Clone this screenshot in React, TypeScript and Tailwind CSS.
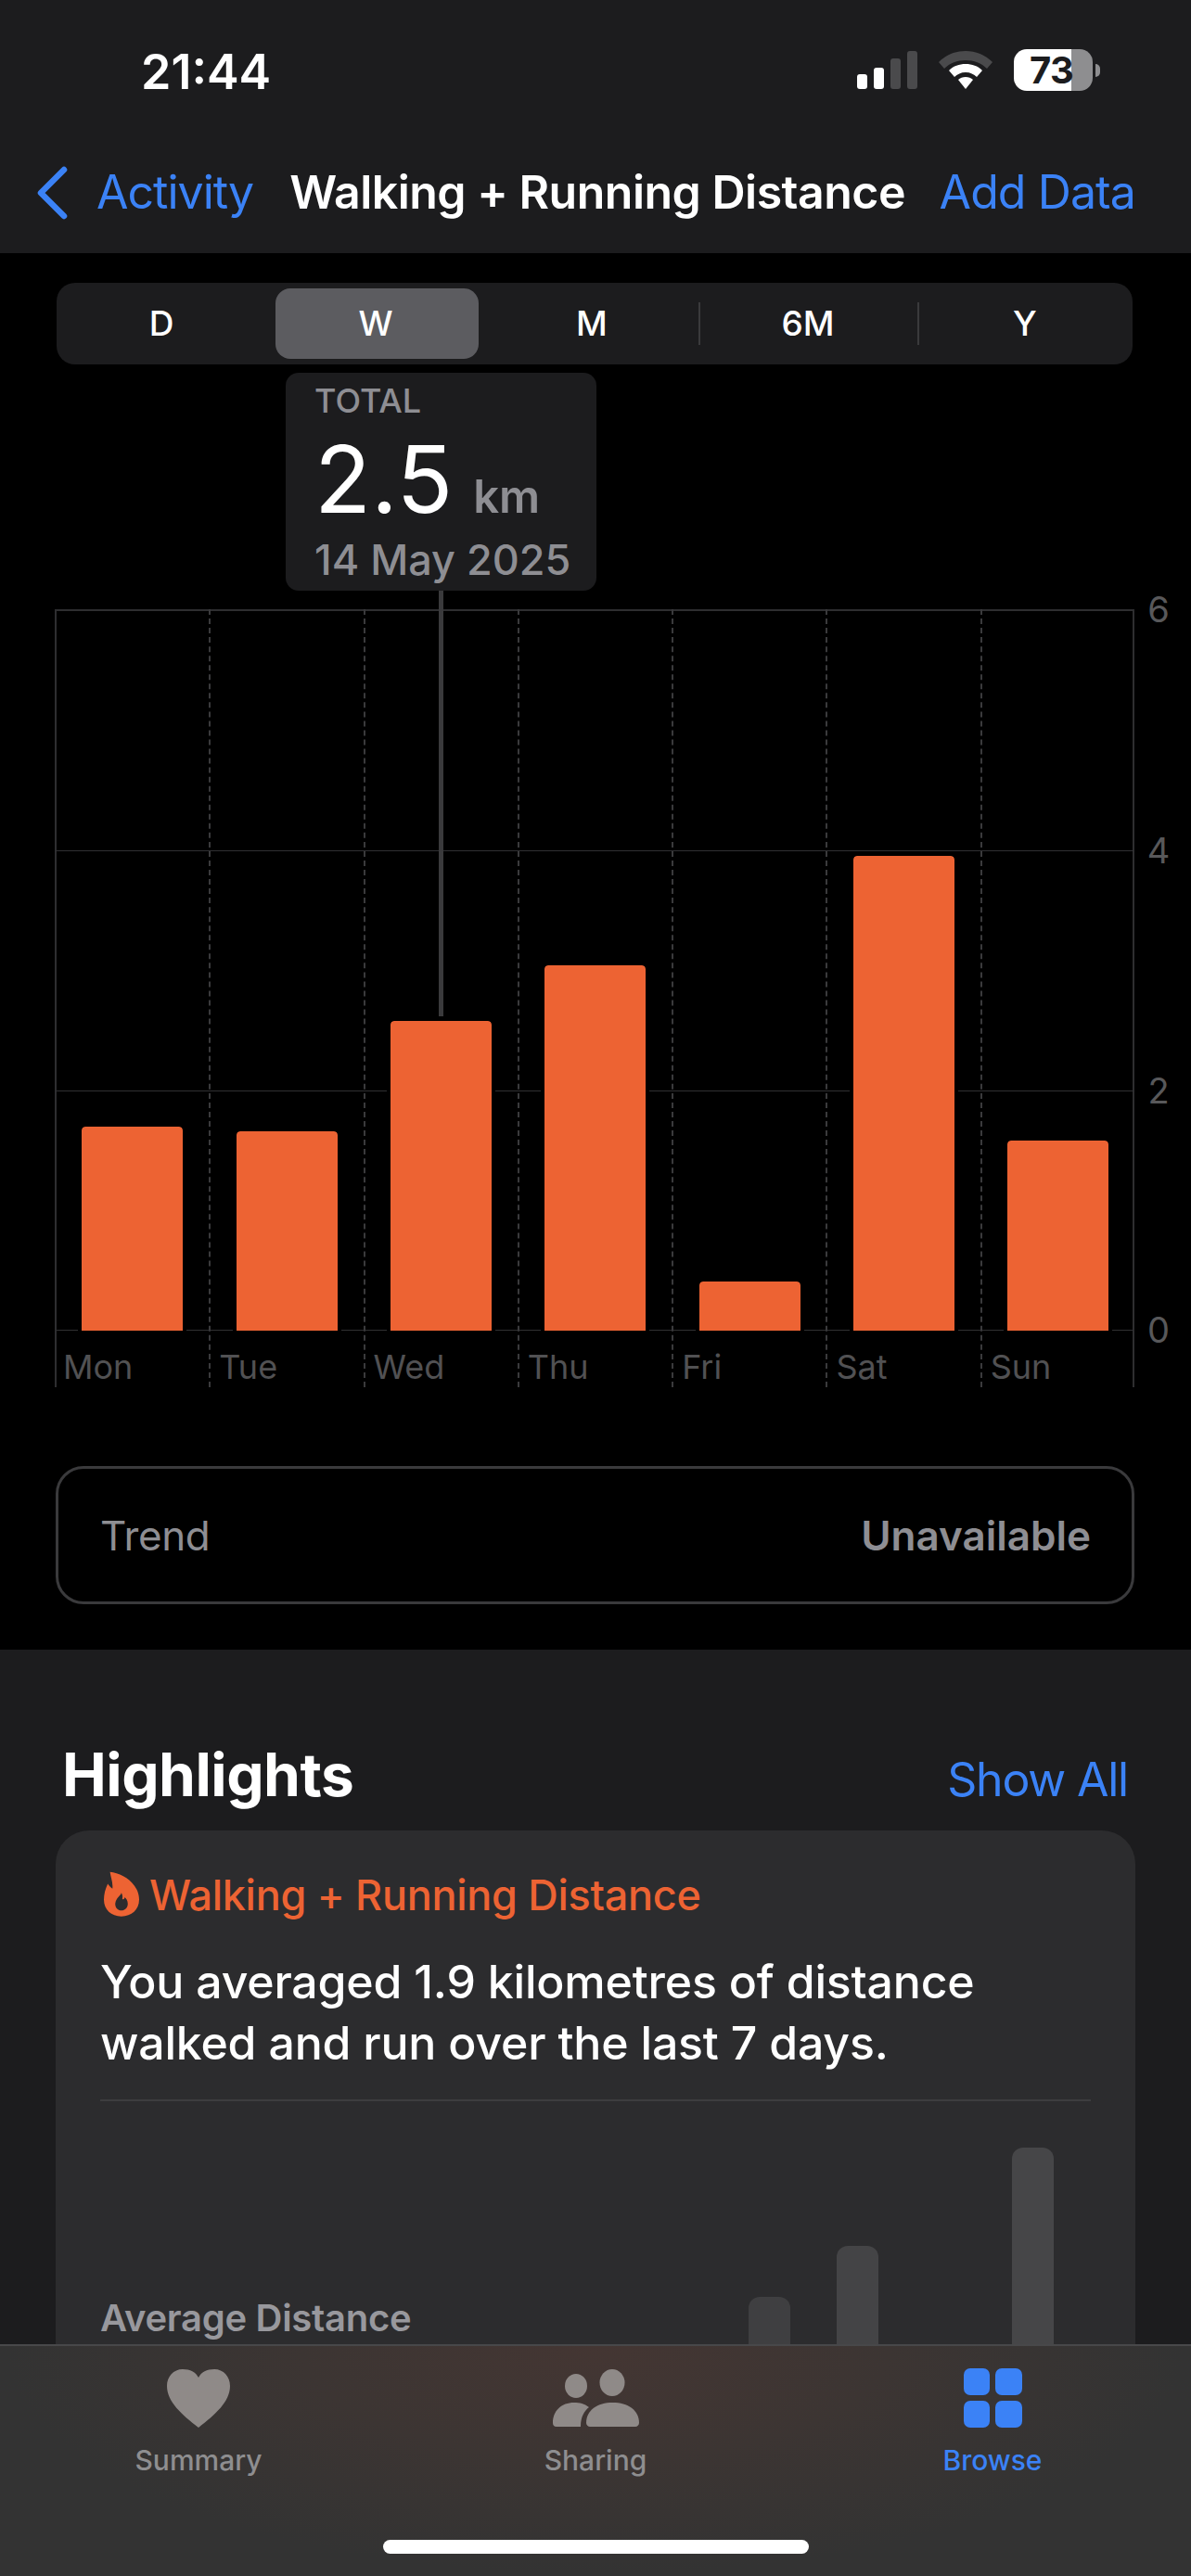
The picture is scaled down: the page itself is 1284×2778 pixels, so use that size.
import React from 'react';

const days = [
  { label: 'Mon', height: 220 },
  { label: 'Tue', height: 215 },
  { label: 'Wed', height: 334, selected: true },
  { label: 'Thu', height: 394 },
  { label: 'Fri', height: 53 },
  { label: 'Sat', height: 512 },
  { label: 'Sun', height: 205 },
];

const ranges = ['D', 'W', 'M', '6M', 'Y'];

const FlameIcon = () => (
  <svg width="38" height="49" viewBox="0 0 115 147" className="-mt-[3px] ml-[4px] shrink-0">
    <path
      fillRule="evenodd"
      fill="#ed6333"
      d="M20 2C60 5 115 40 115 92c0 33-25 55-58 55S0 125 0 92c0-17 5-37 13-52 5 8 9 12 15 16C30 35 22 18 20 2Zm37 68c-2 10-17 15-20 35 0 13 8 22 20 22s21-9 21-22c0-10-5-17-10-21-1 6-4 8-8 6 2-8 0-15-3-20Z"
    />
  </svg>
);

const HeartIcon = () => (
  <svg width="68" height="63" viewBox="0 0 68 63">
    <path
      fill="#8f8a88"
      d="M34 63C16 49 0 35 0 18 0 8 7 0 17 0c8 0 14 3 17 9C37 3 43 0 51 0c10 0 17 8 17 18 0 17-16 31-34 45Z"
    />
  </svg>
);

const PeopleIcon = () => (
  <svg width="93" height="62" viewBox="0 0 93 62" fill="#8f8a88">
    <ellipse cx="25" cy="18" rx="12" ry="13" />
    <ellipse cx="64" cy="14.5" rx="13.5" ry="14.5" />
    <path d="M0 58c0-13 9-22 23-22 6 0 11 1 16 5-5 4-9 10-9 21H4c-3 0-4-2-4-4Z" />
    <path d="M36 58c0-14 12-22 28.500-22S93 44 93 58c0 2-2 4-4 4H40c-2 0-4-2-4-4Z" />
  </svg>
);

const GridIcon = () => (
  <div className="grid w-[63px] grid-cols-2 gap-[6px]">
    <div className="h-[29px] rounded-[7px] bg-[#3b82f6]" />
    <div className="h-[29px] rounded-[7px] bg-[#3b82f6]" />
    <div className="h-[29px] rounded-[7px] bg-[#3b82f6]" />
    <div className="h-[29px] rounded-[7px] bg-[#3b82f6]" />
  </div>
);

const WifiIcon = () => (
  <svg width="58" height="42" viewBox="0 0 58 42">
    <path fill="#4a4a4c" d="M29 0c11 0 21 4 29 12l-6 7c-6-6-14-9-23-9S12 13 6 19l-6-7C8 4 18 0 29 0Z" />
    <path fill="#fff" d="M29 14c7 0 13 2 18 7l-6 7c-3-3-7-5-12-5s-9 2-12 5l-6-7c5-5 11-7 18-7Z" />
    <path fill="#fff" d="M29 28c3 0 6 1 8 3l-8 10-8-10c2-2 5-3 8-3Z" />
  </svg>
);

const StatusBar = () => (
  <div className="flex h-[130px] items-start justify-between pt-[48px] pl-[152px] pr-[98px]">
    <div className="text-[52px] font-semibold leading-[60px] text-white">21:44</div>
    <div className="flex items-start pt-[7px]">
      <div className="flex h-[41px] items-end gap-[7px]">
        <div className="h-[16px] w-[11px] rounded-[3px] bg-white" />
        <div className="h-[23px] w-[11px] rounded-[3px] bg-white" />
        <div className="h-[33px] w-[11px] rounded-[3px] bg-[#4a4a4c]" />
        <div className="h-[41px] w-[11px] rounded-[3px] bg-[#4a4a4c]" />
      </div>
      <div className="ml-[23px] mr-[23px]">
        <WifiIcon />
      </div>
      <div className="-mt-[2px] flex items-center">
        {/* battery level is a hard stop in the gradient */}
        <div className="flex h-[45px] w-[85px] items-center rounded-[14px] bg-[linear-gradient(90deg,#ffffff_62px,#8e8e90_62px)] pl-[17px] text-[40px] font-bold leading-none tracking-[-0.5px] text-[#1c1c1e]">
          73
        </div>
        <div className="ml-[3px] h-[14px] w-[5px] rounded-r-full bg-[#8e8e90]" />
      </div>
    </div>
  </div>
);

const NavBar = () => (
  <div className="flex h-[143px] items-start pt-[47px] pl-[39px] pr-[60px]">
    <svg width="34" height="58" viewBox="0 0 34 58" fill="none" className="mt-[2px]">
      <path d="M30 4 5 29l25 25" stroke="#3b82f6" strokeWidth="6.5" strokeLinecap="round" strokeLinejoin="round" />
    </svg>
    <span className="ml-[31px] text-[50px] leading-[60px] tracking-[-1px] text-[#3b82f6]">Activity</span>
    <span className="ml-[39px] whitespace-nowrap text-[50px] font-semibold leading-[60px] tracking-[-0.5px] text-white">
      Walking + Running Distance
    </span>
    <span className="ml-auto whitespace-nowrap text-[50px] leading-[60px] tracking-[-0.9px] text-[#3b82f6]">Add Data</span>
  </div>
);

const RangePicker = () => (
  <div className="mx-[61px] mt-[32px] grid h-[88px] w-[1160px] grid-cols-[226px_236px_230px_236px_232px] items-center rounded-[20px] bg-[#1c1c1e]">
    {ranges.map((range, i) => (
      <div key={range} className="relative flex h-full items-center justify-center">
        {range === 'W' && <div className="absolute bottom-[6px] left-[10px] right-[7px] top-[6px] rounded-[16px] bg-[#5c5c60]" />}
        {i >= 3 && <div className="absolute left-0 top-[21px] h-[46px] w-[2px] bg-[#3a3a3c]" />}
        <span className="relative text-[37px] font-medium text-white">{range}</span>
      </div>
    ))}
  </div>
);

const GridLine = ({ top, label }: { top: number; label: string }) => (
  <>
    <div className="absolute left-0 right-0 h-[1px] bg-[#303032]" style={{ top }} />
    <span
      className="absolute left-[1176px] w-[28px] text-center text-[38px] leading-[40px] text-[#58585a]"
      style={{ top: top - 20 }}
    >
      {label}
    </span>
  </>
);

const Chart = () => (
  <div className="relative ml-[59px] mt-[20px] h-[839px] w-[1164px]">
    {/* tooltip for the selected day, with its stem down to the bar */}
    <div className="absolute left-[249px] top-[-255px] z-10 h-[235px] w-[335px] rounded-[14px] bg-[#1c1c1e] px-[31px] pt-[8px]">
      <div className="text-[36px] font-medium leading-[44px] text-[#8e8e93]">TOTAL</div>
      <div className="mt-[13px] flex items-baseline">
        <span className="text-[100px] leading-[100px] text-white">2.5</span>
        <span className="ml-[22px] text-[49px] font-semibold leading-none text-[#8e8e93]">km</span>
      </div>
      <div className="mt-[10px] whitespace-nowrap text-[45px] font-medium leading-[54px] text-[#8e8e93]">14 May 2025</div>
    </div>
    <div className="absolute left-[414px] top-[-20px] z-10 h-[459px] w-[5px] bg-[#3a3a3c]" />

    {/* plot area */}
    <div className="absolute inset-x-0 top-0 h-[778px] border-l-2 border-r-2 border-t-2 border-[#2e2e30]" />
    <GridLine top={260} label="4" />
    <GridLine top={519} label="2" />
    <GridLine top={777} label="0" />
    <span className="absolute left-[1176px] top-[-20px] w-[28px] text-center text-[38px] leading-[40px] text-[#58585a]">
      6
    </span>
    <div className="absolute bottom-0 left-0 h-[62px] w-[2px] bg-[#2e2e30]" />
    <div className="absolute bottom-0 right-0 h-[62px] w-[2px] bg-[#2e2e30]" />

    <div className="absolute inset-x-0 top-0 grid h-full grid-cols-7">
      {days.map((day, i) => (
        <div
          key={day.label}
          className={
            i === 0
              ? 'flex flex-col'
              : 'flex flex-col border-l-2 border-dashed border-[#3a3a3c]'
          }
        >
          <div className="flex h-[778px] items-end justify-center">
            <div
              className="w-[109px] rounded-t-[4px] bg-[#ed6333] outline-[4px] outline-black"
              style={{ height: day.height }}
            />
          </div>
          <div className="pl-[9px] pt-[17px] text-[36px] leading-[44px] text-[#515153]">{day.label}</div>
        </div>
      ))}
    </div>
  </div>
);

const TrendCard = () => (
  <div className="ml-[60px] mt-[85px] flex h-[149px] w-[1163px] items-center justify-between rounded-[30px] border-[3px] border-[#3a3a3c] pl-[45px] pr-[44px]">
    <span className="text-[44px] tracking-[-0.4px] text-[#8e8e93]">Trend</span>
    <span className="text-[44px] font-semibold text-[#8e8e93]">Unavailable</span>
  </div>
);

const Highlights = () => (
  <div className="flex-1 bg-[#1c1c1e] px-[60px] pt-[97px]">
    <div className="flex items-baseline justify-between pl-[7px] pr-[8px]">
      <h2 className="text-[64px] font-bold leading-[76px] tracking-[-0.5px] text-white">Highlights</h2>
      <span className="text-[50px] leading-[60px] tracking-[-1.2px] text-[#3b82f6]">Show All</span>
    </div>
    <div className="mt-[22px] h-[700px] rounded-[36px] bg-[#2c2c2e] px-[48px] pt-[44px]">
      <div className="flex items-center gap-[11px]">
        <FlameIcon />
        <span className="text-[45px] font-medium leading-[52px] tracking-[-0.3px] text-[#ed6333]">Walking + Running Distance</span>
      </div>
      <p className="mt-[34px] text-[50px] font-medium leading-[66px] tracking-[-0.2px] text-white">
        You averaged 1.9 kilometres of distance
        <br />
        walked and run over the last 7 days.
      </p>
      <div className="mt-[28px] h-[2px] bg-[#3d3d3f]" />
      <div className="relative mt-[49px] h-[300px]">
        <div className="absolute left-0 top-[161px] text-[40px] font-semibold leading-[48px] tracking-[-0.3px] text-[#98989d]">
          Average Distance
        </div>
        <div className="absolute left-[699px] top-[162px] h-[100px] w-[45px] rounded-t-[12px] bg-[#3f3f41]" />
        <div className="absolute left-[794px] top-[107px] h-[160px] w-[45px] rounded-t-[12px] bg-[#444446]" />
        <div className="absolute left-[983px] top-[1px] h-[260px] w-[45px] rounded-t-[12px] bg-[#464648]" />
      </div>
    </div>
  </div>
);

const TabBar = () => (
  <div className="absolute inset-x-0 bottom-0 h-[250px] border-t-2 border-[#48484a] bg-[radial-gradient(ellipse_at_50%_0%,#443633_0%,#3c3533_35%,#333333_70%)]">
    <div className="grid grid-cols-3 pt-[24px]">
      <div className="flex flex-col items-center">
        <div className="flex h-[64px] items-center"><HeartIcon /></div>
        <span className="mt-[17px] text-[30px] font-medium leading-[36px] text-[#8e8e90]">Summary</span>
      </div>
      <div className="flex flex-col items-center">
        <div className="flex h-[64px] items-center"><PeopleIcon /></div>
        <span className="mt-[17px] text-[30px] font-medium leading-[36px] text-[#8e8e90]">Sharing</span>
      </div>
      <div className="flex flex-col items-center">
        <div className="flex h-[64px] items-center"><GridIcon /></div>
        <span className="mt-[17px] text-[30px] font-medium leading-[36px] text-[#3b82f6]">Browse</span>
      </div>
    </div>
    <div className="absolute bottom-[24px] left-[413px] h-[15px] w-[459px] rounded-full bg-white" />
  </div>
);

export default function App() {
  return (
    <div className="relative flex h-[2778px] w-[1284px] flex-col overflow-hidden bg-black font-['Inter',sans-serif]">
      <div className="h-[273px] shrink-0 bg-[#1c1c1e]">
        <StatusBar />
        <NavBar />
      </div>
      <RangePicker />
      <div className="mt-[244px]">
        <Chart />
      </div>
      <TrendCard />
      <div className="mt-[49px] flex flex-1 flex-col">
        <Highlights />
      </div>
      <TabBar />
    </div>
  );
}
